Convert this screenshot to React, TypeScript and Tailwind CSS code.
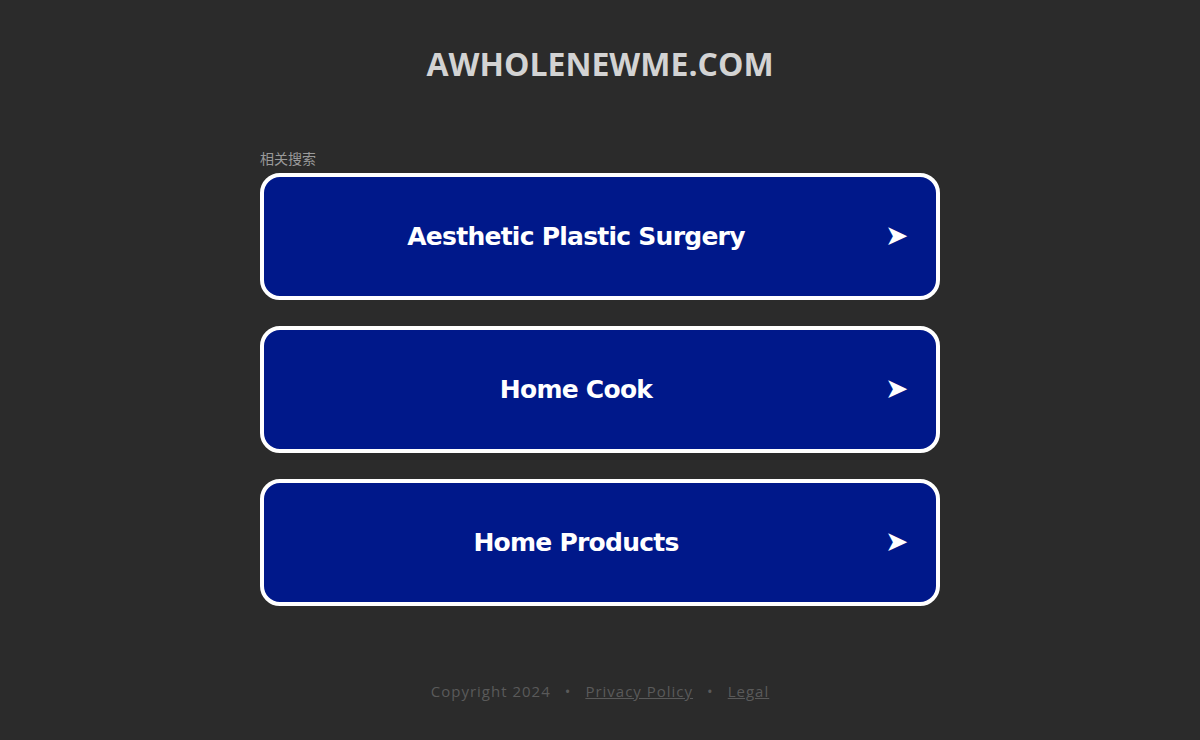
const links = ['Aesthetic Plastic Surgery', 'Home Cook', 'Home Products']

export default function App() {
  return (
    <div className="min-h-[740px] bg-[#2b2b2b] flex flex-col items-center font-['Open_Sans',sans-serif]">
      {/* Domain header */}
      <h1 className="mt-[42px] text-[32px] leading-[44px] font-bold text-[#d3d3d3]">
        AWHOLENEWME.COM
      </h1>

      {/* Related searches */}
      <div className="mt-[64px] w-[680px]">
        <div className="text-[14px] leading-[16px] text-[#9a9a9a] font-['Noto_Sans_CJK_SC',sans-serif]">
          相关搜索
        </div>
        <div className="mt-[7px] flex flex-col gap-[26px]">
          {links.map((label) => (
            <a
              key={label}
              href="#"
              className="relative flex items-center h-[127px] rounded-[20px] border-4 border-white bg-[#00188a] pr-[48px]"
            >
              <span className="flex-1 text-center text-white font-bold text-[25px] font-['DejaVu_Sans',Verdana,sans-serif] tracking-[-0.75px]">
                {label}
              </span>
              <span className="absolute right-[28px] top-1/2 -translate-y-[62%] text-white text-[28px] leading-none">
                ➤
              </span>
            </a>
          ))}
        </div>
      </div>

      {/* Footer */}
      <div className="mt-[74px] flex items-center gap-[14px] text-[15px] text-[#5a5a5a] tracking-[1px] font-['Open_Sans',sans-serif]">
        <span>Copyright 2024</span>
        <span>•</span>
        <a href="#" className="underline">Privacy Policy</a>
        <span>•</span>
        <a href="#" className="underline">Legal</a>
      </div>
    </div>
  )
}
